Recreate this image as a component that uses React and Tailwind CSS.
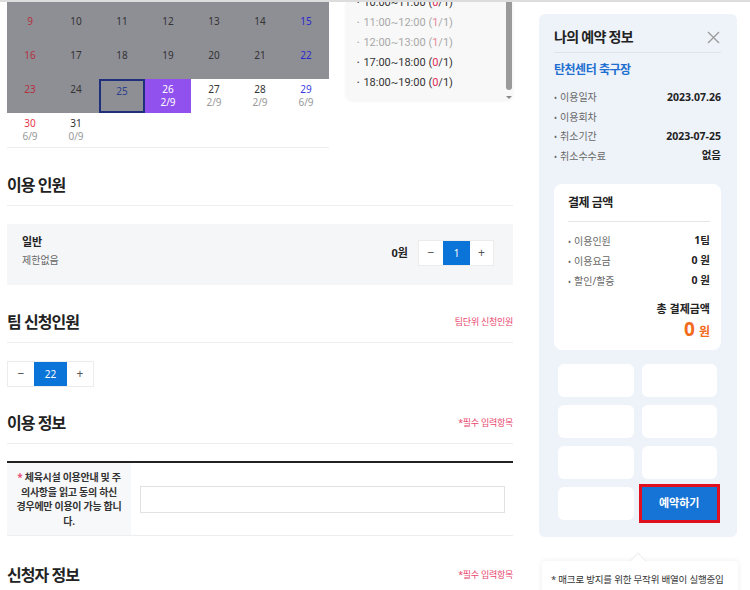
import React from 'react';

const SUN = 'sun';
const SAT = 'sat';

// 달력 행 (스크롤로 위쪽 행은 잘린 상태)
const weeks = [
  [
    { d: 9, k: SUN, off: true }, { d: 10, off: true }, { d: 11, off: true }, { d: 12, off: true },
    { d: 13, off: true }, { d: 14, off: true }, { d: 15, k: SAT, off: true },
  ],
  [
    { d: 16, k: SUN, off: true }, { d: 17, off: true }, { d: 18, off: true }, { d: 19, off: true },
    { d: 20, off: true }, { d: 21, off: true }, { d: 22, k: SAT, off: true },
  ],
  [
    { d: 23, k: SUN, off: true }, { d: 24, off: true }, { d: 25, off: true, today: true },
    { d: 26, sel: true, c: '2/9' }, { d: 27, c: '2/9' }, { d: 28, c: '2/9' }, { d: 29, k: SAT, c: '6/9' },
  ],
  [{ d: 30, k: SUN, c: '6/9' }, { d: 31, c: '0/9' }, null, null, null, null, null],
];

function DayCell({ day }) {
  if (!day) return <div className="h-[34px]" />;
  let bg = 'bg-white';
  let color = 'text-[#333]';
  if (day.off) {
    bg = 'bg-[#8e8e95]';
    color = day.k === SUN ? 'text-[#b4323f]' : day.k === SAT ? 'text-[#2a2ad0]' : 'text-[#333]';
    if (day.today) color = 'text-[#2d3f8a]';
  } else if (day.sel) {
    bg = 'bg-[#9151ef]';
    color = 'text-white';
  } else {
    color = day.k === SUN ? 'text-[#e5364a]' : day.k === SAT ? 'text-[#3a3ae0]' : 'text-[#333]';
  }
  return (
    <div
      className={`h-[34px] flex flex-col items-center pt-[3px] ${bg} ${
        day.today ? 'border-2 border-[#1e2f7c] pt-[1px]' : ''
      }`}
    >
      <span className={`text-[10px] leading-[14px] ${color}`}>{day.d}</span>
      {day.c && (
        <span className={`text-[10px] leading-[13px] ${day.sel ? 'text-white' : 'text-[#999]'}`}>{day.c}</span>
      )}
    </div>
  );
}

const slots = [
  { t: '10:00~11:00', n: '0', dim: false },
  { t: '11:00~12:00', n: '1', dim: true },
  { t: '12:00~13:00', n: '1', dim: true },
  { t: '17:00~18:00', n: '0', dim: false },
  { t: '18:00~19:00', n: '0', dim: false },
];

function Stepper({ value, wide }) {
  return (
    <div className="flex h-[26px] bg-white border border-[#ececec] text-[12px]">
      <button className={`${wide ? 'w-[26px]' : 'w-[24px]'} flex items-center justify-center text-[#555]`}>−</button>
      <div className={`${wide ? 'w-[33px]' : 'w-[27px]'} flex items-center justify-center bg-[#0b74d8] text-white text-[10px]`}>
        {value}
      </div>
      <button className={`${wide ? 'w-[26px]' : 'w-[23px]'} flex items-center justify-center text-[#555]`}>+</button>
    </div>
  );
}

function SectionHead({ title, note, top }) {
  return (
    <div className={`flex items-center justify-between ${top} pb-[10px] border-b border-[#eeeeee]`}>
      <h2 className="text-[16px] leading-[20px] font-semibold tracking-[-0.06em] text-[#222]">{title}</h2>
      {note && <span className="text-[9px] text-[#e8466e] tracking-[-0.03em]">{note}</span>}
    </div>
  );
}

function InfoRow({ label, value, lh }) {
  return (
    <div className={`flex justify-between items-center ${lh}`}>
      <span className="text-[10px] text-[#666]">
        <span className="text-[8px] mr-[3px]">•</span>
        {label}
      </span>
      <span className="text-[10.5px] font-bold text-[#222]">{value}</span>
    </div>
  );
}

export default function App() {
  return (
    <div className="w-[750px] h-[590px] overflow-hidden bg-white font-['Noto_Sans','Noto_Sans_CJK_KR',sans-serif]">
      <div className="h-[2px] bg-[#dddddd]" />
      <div className="flex pl-[7px]">
        {/* 왼쪽 영역 */}
        <div className="w-[506px]">
          <div className="flex gap-[17px]">
            {/* 달력 */}
            <div className="w-[322px] border-b border-[#eeeeee]">
              <div className="h-[9px] bg-[#8e8e95]" />
              {weeks.map((w, i) => (
                <div key={i} className="grid grid-cols-7">
                  {w.map((d, j) => (
                    <DayCell key={j} day={d} />
                  ))}
                </div>
              ))}
            </div>
            {/* 시간 목록 */}
            <div className="w-[167px] h-[98px] flex bg-[#f8f8f8] rounded-b-[6px] shadow-[0_1px_3px_rgba(0,0,0,0.06)] overflow-hidden">
              <ul className="flex-1 pl-[11px] -mt-[9px]">
                {slots.map((s) => (
                  <li
                    key={s.t}
                    className={`text-[11px] leading-[20px] font-['Roboto',sans-serif] ${
                      s.dim ? 'text-[#a8a8a8]' : 'text-[#333]'
                    }`}
                  >
                    <span className="text-[7px] mr-[4px] align-middle">•</span>
                    {s.t} (
                    <span className={s.dim ? 'text-[#e58a98]' : 'text-[#e02a55]'}>{s.n}</span>
                    /1)
                  </li>
                ))}
              </ul>
              <div className="w-[6px] mr-[1px] flex flex-col items-center">
                <div className="w-[6px] h-[88px] bg-[#9a9a9a] rounded-b-[3px]" />
                <div className="mt-[6px] w-0 h-0 border-x-[3px] border-x-transparent border-t-[3px] border-t-[#888]" />
              </div>
            </div>
          </div>

          {/* 이용 인원 */}
          <SectionHead title="이용 인원" top="pt-[27px]" />
          <div className="mt-[18px] h-[61px] bg-[#f5f6f8] flex items-center justify-between pl-[15px] pr-[19px]">
            <div className="-mt-[8px]">
              <div className="text-[11px] leading-[16px] font-semibold text-[#222]">일반</div>
              <div className="mt-[3px] text-[10px] leading-[14px] text-[#666]">제한없음</div>
            </div>
            <div className="flex items-center gap-[10px] -mt-[3px]">
              <span className="text-[11px] font-bold text-[#222]">0원</span>
              <Stepper value="1" />
            </div>
          </div>

          {/* 팀 신청인원 */}
          <SectionHead title="팀 신청인원" note="팀단위 신청인원" top="pt-[27px]" />
          <div className="mt-[18px] w-fit">
            <Stepper value="22" wide />
          </div>

          {/* 이용 정보 */}
          <SectionHead title="이용 정보" note="*필수 입력항목" top="pt-[26px]" />
          <div className="mt-[17px] border-t-2 border-[#222] border-b border-b-[#eeeeee] flex h-[75px]">
            <div className="w-[124px] bg-[#f7f8fa] flex items-center justify-center">
              <p className="text-[10px] leading-[14.5px] font-semibold text-[#333] text-center whitespace-nowrap tracking-[-0.03em]">
                <span className="text-[#e8466e]">* </span>체육시설 이용안내 및 주<br />
                의사항을 읽고 동의 하신<br />
                경우에만 이용이 가능 합니<br />
                다.
              </p>
            </div>
            <div className="flex-1 flex items-center pl-[9px] pr-[8px]">
              <input className="w-full h-[27px] border border-[#e2e2e2] bg-white outline-none" />
            </div>
          </div>

          {/* 신청자 정보 */}
          <SectionHead title="신청자 정보" note="*필수 입력항목" top="pt-[29px]" />
        </div>

        {/* 오른쪽 예약 정보 */}
        <div className="ml-[26px] w-[198px]">
          <div className="mt-[12px] bg-[#eef2f9] rounded-[6px] px-[15px] pt-[13px] pb-[17px] pr-[16px]">
            <div className="flex items-center justify-between pb-[5px] border-b border-[#dde3ec]">
              <h3 className="text-[14px] leading-[20px] font-semibold text-[#222] tracking-[-0.05em]">나의 예약 정보</h3>
              <svg width="13" height="13" viewBox="0 0 13 13" className="mr-[1px]">
                <path d="M1 1L12 12M12 1L1 12" stroke="#9a9a9a" strokeWidth="1.3" />
              </svg>
            </div>
            <div className="mt-[9px] text-[12px] leading-[16px] font-bold text-[#1e6fd0] tracking-[-0.04em]">탄천센터 축구장</div>
            <div className="mt-[10px]">
              <InfoRow label="이용일자" value="2023.07.26" lh="h-[19.5px]" />
              <InfoRow label="이용회차" value="" lh="h-[19.5px]" />
              <InfoRow label="취소기간" value="2023-07-25" lh="h-[19.5px]" />
              <InfoRow label="취소수수료" value="없음" lh="h-[19.5px]" />
            </div>

            {/* 결제 금액 */}
            <div className="mt-[18px] bg-white rounded-[8px] pl-[14px] pr-[11px] pt-[10px] pb-[6px]">
              <div className="text-[12px] leading-[18px] font-semibold text-[#222] pb-[9px] border-b border-[#e6e6e6] tracking-[-0.04em]">
                결제 금액
              </div>
              <div className="mt-[9px]">
                <InfoRow label="이용인원" value="1팀" lh="h-[20px]" />
                <InfoRow label="이용요금" value="0 원" lh="h-[20px]" />
                <InfoRow label="할인/할증" value="0 원" lh="h-[20px]" />
              </div>
              <div className="mt-[10px] text-right text-[11px] leading-[16px] font-bold text-[#222]">총 결제금액</div>
              <div className="text-right leading-[24px] text-[#f26b1d] font-bold">
                <span className="text-[19px]">0</span>
                <span className="text-[12px] ml-[4px]">원</span>
              </div>
            </div>

            {/* 무작위 배열 버튼 */}
            <div className="mt-[14px] mx-[4px] grid grid-cols-2 gap-[8px]">
              {Array.from({ length: 7 }).map((_, i) => (
                <div key={i} className="h-[33px] bg-white rounded-[6px]" />
              ))}
              <div className="-m-[3px] border-[3px] border-[#e0101e]">
                <button className="w-full h-[33px] bg-[#1674d6] text-white text-[11px] font-semibold">예약하기</button>
              </div>
            </div>
          </div>

          {/* 안내 말풍선 */}
          <div className="relative mt-[24px] ml-[3px] w-[196px] bg-white rounded-[4px] shadow-[0_0_6px_rgba(0,0,0,0.08)] px-[9px] pt-[9px]">
            <div className="absolute -top-[6px] left-[90px] w-[12px] h-[12px] bg-white rotate-45 border-t border-l border-[#eeeeee]" />
            <p className="relative text-[9.5px] leading-[19px] text-[#333] whitespace-nowrap tracking-[-0.02em]">
              * 매크로 방지를 위한 무작위 배열이 실행중입<br />
              니다.
            </p>
          </div>
        </div>
      </div>
    </div>
  );
}
